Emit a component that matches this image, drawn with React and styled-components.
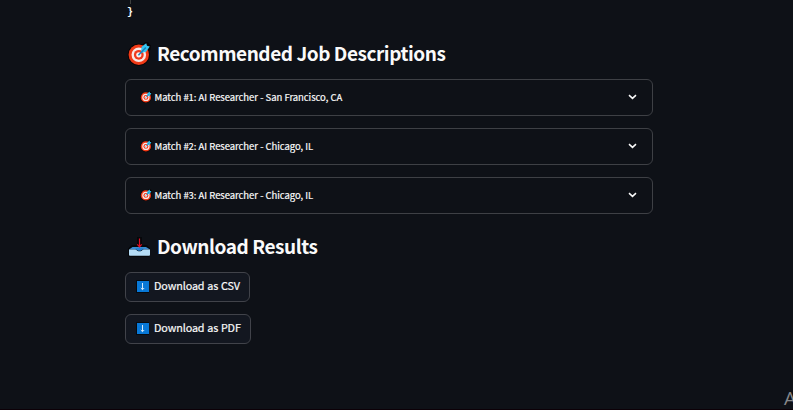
import React from "react";
import styled, { createGlobalStyle } from "styled-components";

const GlobalStyle = createGlobalStyle`
  * { box-sizing: border-box; }
  html, body { margin: 0; background: #0e1117; overflow: hidden; }
`;

const Page = styled.div`
  position: relative;
  width: 793px;
  height: 410px;
  overflow: hidden;
  background: #0e1117;
  border-bottom: 1px solid #0c0007;
  color: #fafafa;
  font-family: "Source Sans Pro", "Noto Sans CJK SC", sans-serif;
`;

const Content = styled.main`
  display: flex;
  flex-direction: column;
  align-items: flex-start;
  width: 528px;
  margin-left: 125px;
`;

const CodeTail = styled.div`
  display: flex;
  flex-direction: column;
  height: 39px;
  padding-left: 2px;
  font: 700 10px/14px "Liberation Mono", monospace;
`;

const IndentGuide = styled.span`
  width: 1px;
  height: 4px;
  margin-left: 3px;
  margin-bottom: 2px;
  background: #3c3e3d;
`;

const Heading = styled.h2`
  display: flex;
  align-items: center;
  gap: 6px;
  height: 30px;
  margin: 0 0 10px;
  padding-left: 2px;
  font-size: 19px;
  line-height: 30px;
  font-weight: 700;
  white-space: nowrap;
  letter-spacing: -0.45px;
`;

const HeadingText = styled.span`
  padding-bottom: 2px;
`;

const MatchList = styled.div`
  display: flex;
  flex-direction: column;
  gap: 12px;
  width: 100%;
  margin-bottom: 18px;
`;

const Expander = styled.div`
  display: flex;
  align-items: center;
  height: 37px;
  padding: 0 15px 1px 14px;
  border: 1px solid #3e4045;
  border-radius: 6px;
`;

const ExpanderLabel = styled.span`
  flex: 1;
  margin-left: 2.5px;
  font-size: 9.5px;
  line-height: 16px;
  white-space: nowrap;
  letter-spacing: -0.06px;
  word-spacing: 0.15px;
  -webkit-text-stroke: 0.2px currentColor;
`;

const ButtonStack = styled.div`
  display: flex;
  flex-direction: column;
  align-items: flex-start;
  gap: 12px;
`;

const DownloadButton = styled.button`
  display: flex;
  align-items: center;
  gap: 5px;
  width: ${(p) => p.$width}px;
  height: 30px;
  padding: 0 0 2px 10px;
  border: 1px solid #41434a;
  border-radius: 6px;
  background: #131720;
  color: #fafafa;
  font: 400 10.8px/18px "Source Sans Pro", "Noto Sans CJK SC", sans-serif;
  letter-spacing: -0.12px;
  word-spacing: 0.5px;
  -webkit-text-stroke: 0.2px currentColor;
  white-space: nowrap;
`;

const ButtonText = styled.span`
  padding-bottom: 2px;
`;

const EdgeText = styled.span`
  position: absolute;
  left: 784px;
  top: 387px;
  color: #85878a;
  font: 400 19px/22px "Open Sans", sans-serif;
`;

const Icon = styled.svg`
  display: block;
  flex: none;
  overflow: visible;
`;

const Target = ({ size }) => (
  <Icon width={size} height={size} viewBox="0 0 24 24">
    <circle cx="11.8" cy="12.8" r="11" fill="#080305" />
    <path d="M13.3 7 14.4 2.7 18.6 0 21.3 .6l2.3 3L23.4 8l-5 3Z" fill="#080305" />
    <circle cx="11.8" cy="12.8" r="10.2" fill="#f03a17" />
    <circle cx="11.8" cy="12.8" r="7.3" fill="#f8e9e7" />
    <circle cx="11.8" cy="12.8" r="4.9" fill="#ef3a1d" />
    <circle cx="11.8" cy="12.8" r="2.6" fill="#f8eeee" />
    <path d="m14 10 .6-5.2L19.2 1.2l.8 2.6 2.8.8-3.7 5.2-4.2.9Z" fill="#35c5f2" />
    <path d="m11.4 13.2 7.4-7.6" stroke="#1680bd" strokeWidth="1.4" />
  </Icon>
);

const Inbox = () => (
  <Icon width="24" height="24" viewBox="0 0 24 24">
    <path d="M1 13.4 5 10h5V2h5v8h5l3 3.4v6.8L21.5 22h-19L1 20.4Z" fill="#05070a" />
    <path d="M2 14.5 5.5 12h13.5l4 2.5Z" fill="#388cd2" />
    <path d="M2 14.5h6q1.5 0 2.2 1.2 2.3 1.2 4.6 0Q15.5 14.5 17 14.5h6v5.3q0 .9-.9.9H2.9q-.9 0-.9-.9Z" fill="#b4dcf5" />
    <path d="M8 13h9l-3 2.7h-3Z" fill="#2582d3" />
    <path d="M12.5 3.5v8m-2.2-2.1 2.2 2.4 2.2-2.4" fill="none" stroke="#e10f24" strokeWidth="1.2" />
  </Icon>
);

const DownIcon = () => (
  <Icon width="13" height="13" viewBox="0 0 13 13">
    <path d="M0 0h13v13H0Z" fill="#070b10" />
    <path d="M1 1h12v11H1Z" fill="#0878d7" />
    <path d="M6.5 3v6.5M4.8 8 6.5 9.7 8.2 8" fill="none" stroke="#d5eafa" strokeWidth="1" />
  </Icon>
);

const Chevron = () => (
  <Icon width="9" height="7" viewBox="0 0 9 7">
    <path d="m1 1.1 3.5 3.3L8 1.1" fill="none" stroke="#fafafa" strokeWidth="1.5" />
  </Icon>
);

const matches = [
  "Match #1: AI Researcher - San Francisco, CA",
  "Match #2: AI Researcher - Chicago, IL",
  "Match #3: AI Researcher - Chicago, IL",
];

export default function App() {
  return (
    <>
      <GlobalStyle />
      <Page>
        <Content>
          <CodeTail><IndentGuide />{"}"}</CodeTail>
          <Heading>
            <Target size={24} />
            <HeadingText>Recommended Job Descriptions</HeadingText>
          </Heading>
          <MatchList>
            {matches.map((label) => (
              <Expander key={label}>
                <Target size={12} />
                <ExpanderLabel>{label}</ExpanderLabel>
                <Chevron />
              </Expander>
            ))}
          </MatchList>
          <Heading>
            <Inbox />
            <HeadingText>Download Results</HeadingText>
          </Heading>
          <ButtonStack>
            <DownloadButton $width={125}><DownIcon /><ButtonText>Download as CSV</ButtonText></DownloadButton>
            <DownloadButton $width={126}><DownIcon /><ButtonText>Download as PDF</ButtonText></DownloadButton>
          </ButtonStack>
        </Content>
        <EdgeText>A</EdgeText>
      </Page>
    </>
  );
}
